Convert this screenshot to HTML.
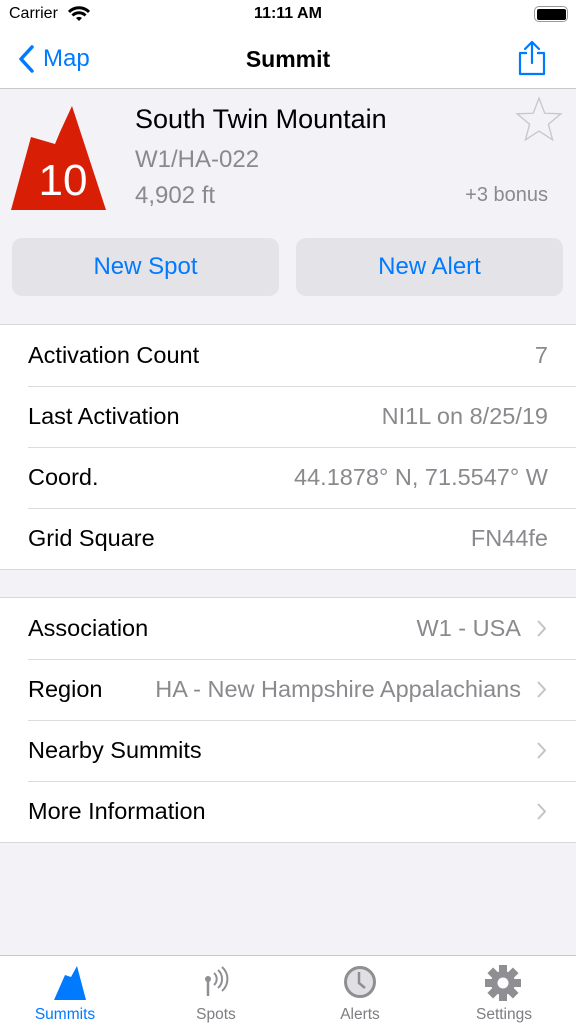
<!DOCTYPE html>
<html><head><meta charset="utf-8"><style>
*{margin:0;padding:0;box-sizing:border-box}
body{width:576px;height:1024px;background:#f2f2f7;font-family:"Liberation Sans",sans-serif;position:relative;overflow:hidden}
.abs{position:absolute}
.nav{left:0;top:0;width:576px;height:89px;background:#fff;border-bottom:1px solid #c8c8cc}
.sec{left:0;width:576px;background:#fff;border-top:1px solid #d8d8dc;border-bottom:1px solid #d8d8dc}
.row{position:relative;height:61px;font-size:23.5px;color:#000;display:flex;align-items:center;padding-left:28px}
.row+.row:before{content:"";position:absolute;left:28px;right:0;top:0;border-top:1px solid #dcdcdf}
.row .v{position:absolute;right:28px;color:#8a8a8e}
.row .v.c{right:55px}
.chev{position:absolute;right:30px;top:22px}
.btn{top:238px;height:58px;width:267px;background:#e3e3e8;border-radius:10px;color:#007aff;font-size:24px;display:flex;align-items:center;justify-content:center}
.tab{top:955px;left:0;width:576px;height:69px;background:#fff;border-top:1px solid #c8c8cc}
.tl{position:absolute;top:50px;font-size:15.5px;color:#7d7d82;width:144px;text-align:center}
</style></head><body>
<div class="abs nav">
 <div class="abs" style="left:9px;top:5px;font-size:16px">Carrier</div>
 <svg class="abs" style="left:68px;top:6px" width="22" height="16" viewBox="0 0 22 16"><path d="M1 6a14 14 0 0 1 20 0" stroke="#000" stroke-width="3" fill="none"/><path d="M4.5 9.5a9 9 0 0 1 13 0" stroke="#000" stroke-width="3" fill="none"/><path d="M11 15l-3-3a4.5 4.5 0 0 1 6 0z" fill="#000"/></svg>
 <div class="abs" style="left:0;width:576px;text-align:center;top:5px;font-size:16px;font-weight:bold">11:11 AM</div>
 <div class="abs" style="left:534px;top:6px;width:34px;height:16px;border:1.5px solid #999;border-radius:5px;padding:1.5px"><div style="width:100%;height:100%;background:#000;border-radius:2px"></div></div>
 <svg class="abs" style="left:16px;top:44px" width="20" height="30" viewBox="0 0 20 30"><path d="M16 3L5 15l11 12" stroke="#007aff" stroke-width="3.5" fill="none" stroke-linecap="round" stroke-linejoin="round"/></svg>
 <div class="abs" style="left:43px;top:45px;font-size:24px;color:#007aff">Map</div>
 <div class="abs" style="left:0;width:576px;text-align:center;top:46px;font-size:23px;font-weight:bold">Summit</div>
 <svg class="abs" style="left:516px;top:40px" width="32" height="36" viewBox="0 0 32 36"><path d="M11 13H4v21h24V13h-7" stroke="#007aff" stroke-width="2.2" fill="none" stroke-linejoin="round"/><path d="M16 23V2M9 9l7-7 7 7" stroke="#007aff" stroke-width="2.2" fill="none" stroke-linecap="round" stroke-linejoin="round"/></svg>
</div>
<svg class="abs" style="left:0;top:90px" width="130" height="130" viewBox="0 90 130 130"><polygon points="11,210 31,137 55,144 60,132 72,106 106,210" fill="#d81e05"/><text x="63" y="195" text-anchor="middle" font-family="Liberation Sans" font-size="44" fill="#fff">10</text></svg>
<div class="abs" style="left:135px;top:104px;font-size:27px">South Twin Mountain</div>
<div class="abs" style="left:135px;top:146px;font-size:24px;color:#8a8a8e">W1/HA-022</div>
<div class="abs" style="left:135px;top:182px;font-size:24px;color:#8a8a8e">4,902 ft</div>
<div class="abs" style="right:28px;top:184px;font-size:20px;color:#8a8a8e">+3 bonus</div>
<svg class="abs" style="left:515px;top:96px" width="48" height="46" viewBox="0 0 46 44"><polygon points="23,2 28.5,16.5 44,17 32,27 36,42 23,33.5 10,42 14,27 2,17 17.5,16.5" fill="none" stroke="#c8c8cc" stroke-width="1.3"/></svg>
<div class="abs btn" style="left:12px">New Spot</div>
<div class="abs btn" style="left:296px">New Alert</div>
<div class="abs sec" style="top:324px">
 <div class="row">Activation Count<span class="v">7</span></div>
 <div class="row">Last Activation<span class="v">NI1L on 8/25/19</span></div>
 <div class="row">Coord.<span class="v">44.1878° N, 71.5547° W</span></div>
 <div class="row">Grid Square<span class="v">FN44fe</span></div>
</div>
<div class="abs sec" style="top:597px">
 <div class="row">Association<span class="v c">W1 - USA</span><svg class="chev" width="10" height="17"><path d="M2 1l7 7.5L2 16" stroke="#c4c4c7" stroke-width="2" fill="none"/></svg></div>
 <div class="row">Region<span class="v c">HA - New Hampshire Appalachians</span><svg class="chev" width="10" height="17"><path d="M2 1l7 7.5L2 16" stroke="#c4c4c7" stroke-width="2" fill="none"/></svg></div>
 <div class="row">Nearby Summits<svg class="chev" width="10" height="17"><path d="M2 1l7 7.5L2 16" stroke="#c4c4c7" stroke-width="2" fill="none"/></svg></div>
 <div class="row">More Information<svg class="chev" width="10" height="17"><path d="M2 1l7 7.5L2 16" stroke="#c4c4c7" stroke-width="2" fill="none"/></svg></div>
</div>
<div class="abs tab">
 <svg class="abs" style="left:50px;top:10px" width="40" height="36" viewBox="0 0 40 36"><polygon points="0,34 11,9 17,11 23,0 32,34" fill="#007aff" transform="translate(4,0)"/></svg>
 <svg class="abs" style="left:200px;top:10px" width="30" height="34" viewBox="0 0 30 34"><circle cx="8" cy="13" r="3" fill="#8e8e93"/><path d="M8 14v16" stroke="#8e8e93" stroke-width="2.5"/><path d="M14 7a8 8 0 0 1 0 12M18 4a12 12 0 0 1 0 18M22 1a16 16 0 0 1 0 24" stroke="#8e8e93" stroke-width="2" fill="none"/></svg>
 <svg class="abs" style="left:342px;top:10px" width="36" height="34" viewBox="0 0 36 34"><circle cx="18" cy="16" r="14.5" fill="#e0e0e2" stroke="#8e8e93" stroke-width="3"/><path d="M17 6v11l6 5" stroke="#8e8e93" stroke-width="2.5" fill="none"/></svg>
 <svg class="abs" style="left:485px;top:9px" width="36" height="36" viewBox="-18 -18 36 36"><g fill="#8e8e93"><circle r="12"/><g id="t"><rect x="-4" y="-18" width="8" height="8"/></g><use href="#t" transform="rotate(45)"/><use href="#t" transform="rotate(90)"/><use href="#t" transform="rotate(135)"/><use href="#t" transform="rotate(180)"/><use href="#t" transform="rotate(225)"/><use href="#t" transform="rotate(270)"/><use href="#t" transform="rotate(315)"/></g><circle r="5.5" fill="#fff"/></svg>
 <div class="tl" style="left:-7px;color:#007aff">Summits</div>
 <div class="tl" style="left:144px">Spots</div>
 <div class="tl" style="left:288px">Alerts</div>
 <div class="tl" style="left:432px">Settings</div>
</div>
</body></html>
